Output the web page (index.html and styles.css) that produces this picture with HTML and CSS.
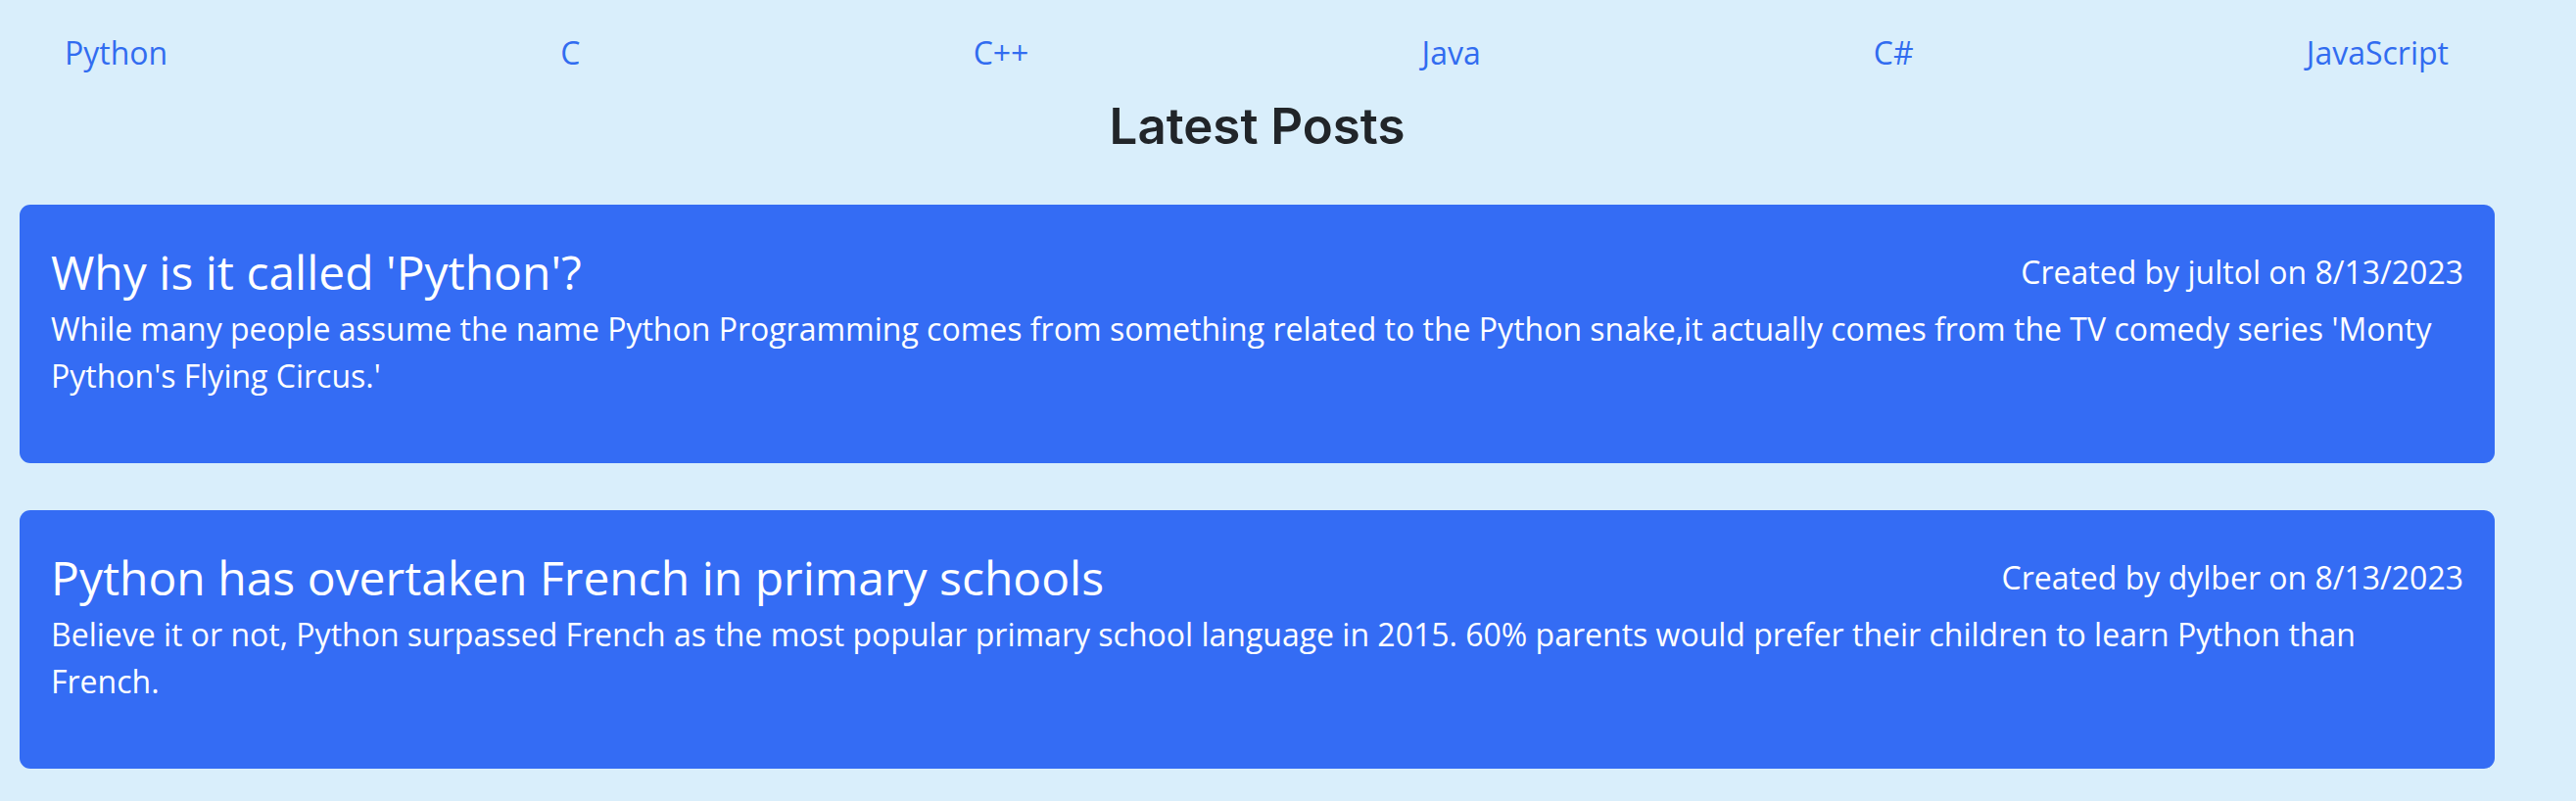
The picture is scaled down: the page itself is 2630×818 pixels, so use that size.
FILE: index.html
```html
<!DOCTYPE html>
<html lang="en">
<head>
<meta charset="utf-8">
<title>Latest Posts</title>
<link rel="stylesheet" href="styles.css">
</head>
<body>
<div class="container">
  <nav class="nav">
    <a class="nav-link" href="#">Python</a>
    <a class="nav-link" href="#">C</a>
    <a class="nav-link" href="#">C++</a>
    <a class="nav-link" href="#">Java</a>
    <a class="nav-link" href="#">C#</a>
    <a class="nav-link" href="#">JavaScript</a>
  </nav>
  <h1 class="page-title">Latest Posts</h1>
  <div class="posts">
    <article class="post">
      <header class="post-header">
        <h2 class="post-title">Why is it called 'Python'?</h2>
        <span class="post-meta">Created by jultol on 8/13/2023</span>
      </header>
      <p class="post-body">While many people assume the name Python Programming comes from something related to the Python snake,it actually comes from the TV comedy series 'Monty Python's Flying Circus.'</p>
    </article>
    <article class="post">
      <header class="post-header">
        <h2 class="post-title">Python has overtaken French in primary schools</h2>
        <span class="post-meta">Created by dylber on 8/13/2023</span>
      </header>
      <p class="post-body">Believe it or not, Python surpassed French as the most popular primary school language in 2015. 60% parents would prefer their children to learn Python than French.</p>
    </article>
  </div>
</div>
</body>
</html>
```

FILE: styles.css
```css
html, body {
  margin: 0;
  padding: 0;
}
body {
  background: #d9eefb;
  font-family: "Open Sans", "Noto Sans", sans-serif;
  color: #212529;
}
.container {
  width: 2527px;
  margin-left: 20px;
}
.nav {
  display: flex;
  justify-content: space-between;
  padding: 30px 47px 0 46px;
}
.nav-link {
  color: #316cf0;
  text-decoration: none;
  font-size: 32px;
  line-height: 48px;
}
.page-title {
  margin: 20px 0 0;
  text-align: center;
  font-family: "Inter", "Noto Sans", sans-serif;
  font-weight: 600;
  font-size: 51px;
  line-height: 62px;
  color: #212529;
}
.posts {
  display: flex;
  flex-direction: column;
  gap: 48px;
  margin-top: 49px;
}
.post {
  background: #346cf4;
  color: #ffffff;
  border-radius: 11px;
  padding: 40px 32px 0 32px;
  height: 264px;
  box-sizing: border-box;
}
.post-header {
  display: flex;
  justify-content: space-between;
  align-items: center;
}
.post-title {
  margin: 0;
  font-weight: 400;
  font-size: 48px;
  line-height: 58px;
}
.post-meta {
  font-size: 32px;
  line-height: 48px;
}
.post-body {
  margin: 5px 0 0;
  font-size: 32px;
  line-height: 48px;
}
```
